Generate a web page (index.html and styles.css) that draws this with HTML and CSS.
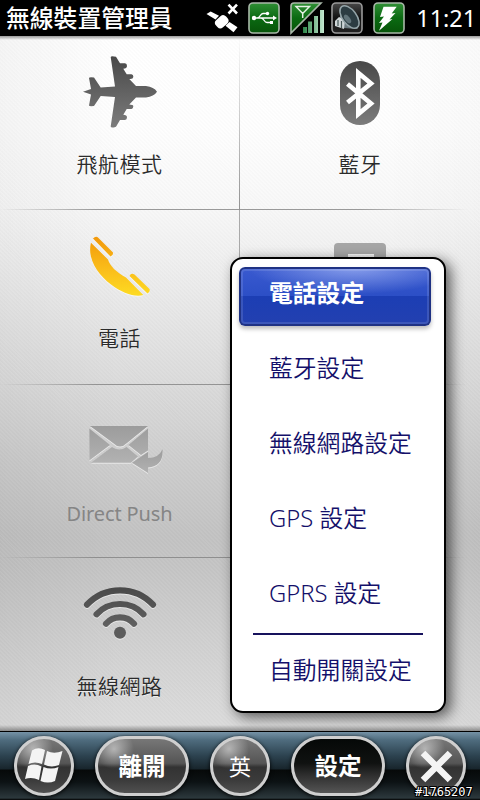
FILE: index.html
```html
<!DOCTYPE html>
<html lang="zh-Hant">
<head>
    <meta charset="utf-8">
    <title>無線裝置管理員</title>
    <link rel="stylesheet" href="styles.css">
</head>
<body>
    <div class="status-bar">
        <h1>無線裝置管理員</h1>
        <div class="status-icons">
            <svg width="32" height="36" viewBox="0 0 32 36" fill="#fff">
                <path d="M.5 14 4.7 11.5 13 15.7 9.5 19.5zM19.5 25.7 23.5 22 31.5 27.3 27.5 32.3z"/>
                <rect x="9" y="16.8" width="13.5" height="10" rx="4" transform="rotate(-42 15.7 21.8)"/>
                <path d="M22.5 4.7 31 13.5M31 4.7 22.5 13.5" stroke="#fff" stroke-width="2.6"/>
            </svg>
            <svg width="32" height="32" viewBox="0 0 32 32">
                <rect x="1" y="1" width="30" height="30" rx="4" fill="url(#green)" stroke="#a9b8a9" stroke-width="1.6"/>
                <path d="M5 16H27M9 16C12 16 12 12 15 11.5H19M13 16C16 16 16 20.500 19 20.500H23" fill="none" stroke="#fff" stroke-width="1.3"/>
                <circle cx="6" cy="16" r="2.200" fill="#fff"/>
                <circle cx="19.500" cy="11.500" r="1.700" fill="#fff"/>
                <rect x="22" y="19" width="3" height="3" fill="#fff"/>
                <path d="M25 13.500 29 16 25 18.500z" fill="#fff"/>
            </svg>
            <svg width="32" height="32" viewBox="0 0 32 32">
                <path d="M4 1H31L1 31V4Q1 1 4 1z" fill="url(#green)" stroke="#a9b8a9" stroke-width="1.6"/>
                <path d="M6 4.500H19.500L12.700 11.500zM12.700 10V16" fill="none" stroke="#e4f2e4" stroke-width="1.500"/>
                <path d="M13 25h4v6h-4zM18 19.500h4V31h-4zM24 14h4v17h-4zM30 8h4v23h-4z" fill="url(#bars)"/>
            </svg>
            <svg width="32" height="32" viewBox="0 0 32 32">
                <rect x="1" y="1" width="30" height="30" rx="4" fill="url(#dark)" stroke="#999" stroke-width="1.6"/>
                <path d="M9 17 9 7 27 27 12 26z" fill="#6b797f"/>
                <path d="M4 19 8 15 14 18 13 27 4 24z" fill="#cfd6d8"/>
                <path d="M7 18v6M10.500 19v7" stroke="#455" stroke-width="1.2"/>
                <ellipse cx="18.500" cy="15" rx="7" ry="13" transform="rotate(-37 18.500 15)" fill="#2c3c42" stroke="#94a4a8" stroke-width="1.500"/>
                <ellipse cx="16.500" cy="17" rx="2.500" ry="5" transform="rotate(-37 16.500 17)" fill="#62747a"/>
            </svg>
            <svg width="32" height="32" viewBox="0 0 32 32">
                <rect x="1" y="1" width="30" height="30" rx="4" fill="url(#green)" stroke="#a9b8a9" stroke-width="1.6"/>
                <path d="M10.500 4.700H23.700L18.700 11.500 22.500 11 16.500 17.500 19.500 17 6 28.700 9.500 20.500 6 21 11 14.500 7 15z" fill="#fff"/>
            </svg>
        </div>
        <span class="clock">11:21</span>
    </div>

    <div class="grid">
        <div class="tile">
            <svg class="icon" viewBox="0 0 80 80" fill="url(#metal)">
                <path d="M3 39.700 11 37 9 26Q9 25 14 25.500L20.700 35.500 35 34.500 30.700 5Q31 3.500 36 4.700L40 11.300H45Q47 11.500 47 14T43.300 16.700L46.700 22.300H51.500Q53.500 22.500 53.300 25T49.300 27L56 34H66Q74 35 77 39.700 74 44.500 66 45.500H56L49.300 52.500Q53.500 52.500 53.300 54.500T51.500 57H46.700L43.300 62.700Q47 62.700 47 65.300T45 68H40L36 74.700Q31 76.500 30.700 74.500L35 45 20.700 44 14 54Q9 54.500 9 53.500L11 42.500z"/>
            </svg>
            <span>飛航模式</span>
        </div>
        <div class="tile">
            <svg class="icon" viewBox="0 0 80 80">
                <rect x="20" y="9" width="40" height="64" rx="20" fill="url(#metal)"/>
                <path d="M27.500 32 51 51.500 38.300 62V21L51 31.500 27.500 50.500" fill="none" stroke="#fff" stroke-width="4.600"/>
            </svg>
            <span>藍牙</span>
        </div>
        <div class="tile">
            <svg class="icon" viewBox="0 0 80 80" fill="url(#gold)">
                <path d="M11 16.700 28 33.500C30 40 36 46 46 51.500L63.300 69C55 71.500 42 67 31 58.500 17 48 7 32 11 16.700z"/>
                <path d="M13 12.500Q16 9.500 18.500 12L33 26.500Q33.500 29 30.500 30.500zM49.500 50Q51 46.500 54.500 48.500L69.500 63Q70.500 65.500 67.500 67.500z"/>
            </svg>
            <span>電話</span>
        </div>
        <div class="tile">
            <svg class="icon" viewBox="0 0 80 80">
                <path d="M14 60V21Q14 17 18 17H62Q66 17 66 21V60H54V28H28V60z" fill="#a6a6a6"/>
            </svg>
        </div>
        <div class="tile off">
            <svg class="icon" viewBox="0 0 80 80" fill="url(#pale)">
                <path d="M10 25H68L47 42Q40 49 33 42zM9.300 27.500 30 44 9.300 59.500zM68 27.500V49.500L61 54 48.500 44zM11 61.700 32 46Q39.500 51 46.500 46L58 55.500 51 61.700z"/>
                <path d="M52 61.700 68 51V57Q79 57 82.500 48.300 84 65 68 66.500V72z"/>
            </svg>
            <span class="latin">Direct Push</span>
        </div>
        <div class="tile"></div>
        <div class="tile">
            <svg class="icon" viewBox="0 0 80 80" fill="none" stroke="url(#wave)" stroke-width="6.200" stroke-linecap="round">
                <path d="M7 30.700A45 45 0 0 1 73 30.700M16.500 40.300A32 32 0 0 1 63.500 40.300M26 49.700A18.500 18.500 0 0 1 54 49.700"/>
                <circle cx="40" cy="58.700" r="6" fill="#5c5c5c" stroke="none"/>
            </svg>
            <span>無線網路</span>
        </div>
        <div class="tile"></div>

        <div class="menu">
            <div class="item selected">電話設定</div>
            <div class="item">藍牙設定</div>
            <div class="item">無線網路設定</div>
            <div class="item">GPS 設定</div>
            <div class="item">GPRS 設定</div>
            <div class="line"></div>
            <div class="item last">自動開關設定</div>
        </div>
    </div>

    <div class="toolbar">
        <div class="button round">
            <svg width="60" height="60" viewBox="0 0 60 60" fill="#f4f4f4">
                <path d="M18 14.500Q24 10.500 31 14L28 28Q21 25 14.500 28zM33 15Q40 18.500 48.500 15L45 29Q37 32 30 28.500zM14 30Q21 27 27.500 30.500L25 44Q18 40.500 11 43zM29.500 31Q37 34 44.500 31L41 45Q34 48 26.500 45z"/>
            </svg>
        </div>
        <div class="button">離開</div>
        <div class="button round lang">英</div>
        <div class="button pressed">設定</div>
        <div class="button round">
            <svg width="60" height="60" viewBox="0 0 60 60">
                <path d="M17 17 44 44M44 17 17 44" stroke="#f4f4f4" stroke-width="6.500"/>
            </svg>
        </div>
        <span class="stamp">#1765207</span>
    </div>

    <!-- shared gradients -->
    <svg class="defs" width="0" height="0">
        <defs>
            <linearGradient id="green" x1="0" y1="0" x2="0" y2="1">
                <stop offset="0" stop-color="#2f8f35"/>
                <stop offset=".5" stop-color="#0b6a12"/>
                <stop offset="1" stop-color="#075409"/>
            </linearGradient>
            <linearGradient id="bars" x1="0" y1="0" x2="1" y2="0">
                <stop offset="0" stop-color="#2c8548"/>
                <stop offset="1" stop-color="#c4e8d0"/>
            </linearGradient>
            <linearGradient id="dark" x1="0" y1="0" x2="0" y2="1">
                <stop offset="0" stop-color="#484848"/>
                <stop offset=".5" stop-color="#111"/>
                <stop offset="1" stop-color="#222"/>
            </linearGradient>
            <linearGradient id="metal" x1="0" y1="0" x2="0" y2="1">
                <stop offset="0" stop-color="#484848"/>
                <stop offset="1" stop-color="#7c7c7c"/>
            </linearGradient>
            <linearGradient id="wave" gradientUnits="userSpaceOnUse" x1="0" y1="12" x2="0" y2="60">
                <stop offset="0" stop-color="#484848"/>
                <stop offset="1" stop-color="#666"/>
            </linearGradient>
            <linearGradient id="gold" gradientUnits="userSpaceOnUse" x1="0" y1="12" x2="0" y2="70">
                <stop offset="0" stop-color="#f29a0c"/>
                <stop offset=".6" stop-color="#fbc11b"/>
                <stop offset="1" stop-color="#fddb22"/>
            </linearGradient>
            <linearGradient id="pale" x1="0" y1="0" x2="0" y2="1">
                <stop offset="0" stop-color="#9c9c9c"/>
                <stop offset="1" stop-color="#b2b2b2"/>
            </linearGradient>
        </defs>
    </svg>
</body>
</html>
```
FILE: styles.css
```css
body {
    margin: 0;
    width: 480px;
    height: 800px;
    display: flex;
    flex-direction: column;
    position: relative;
    overflow: hidden;
    background: #000;
    font-family: "Noto Sans", "Noto Sans CJK TC", sans-serif;
}

.status-bar {
    height: 36px;
    display: flex;
    align-items: center;
    color: #fff;
    background: #000;
}

.status-bar h1 {
    width: 200px;
    margin: 0 0 0 6px;
    font-size: 23.8px;
    font-weight: 500;
    line-height: 36px;
    white-space: nowrap;
}

.status-icons {
    display: flex;
    align-items: center;
    gap: 9.8px;
}

.status-icons svg {
    overflow: visible;
}

.clock {
    margin-left: 11px;
    font-size: 23.5px;
    line-height: 35px;
}

.grid {
    height: 695px;
    display: grid;
    grid-template-columns: 240px 240px;
    grid-template-rows: 174px 175px 173px 173px;
    position: relative;
    background:
        linear-gradient(#999 0, rgba(255,255,255,0) 4px),
        linear-gradient(rgba(0,0,0,0) 689px, rgba(0,0,0,0.35) 695px),
        repeating-linear-gradient(45deg, rgba(255,255,255,0.04) 0, rgba(255,255,255,0.04) 1.4px, rgba(0,0,0,0.01) 1.4px, rgba(0,0,0,0.01) 2.8px),
        linear-gradient(90deg, rgba(0,0,0,0.04), rgba(0,0,0,0) 25%, rgba(0,0,0,0) 80%, rgba(0,0,0,0.02)),
        linear-gradient(#fff 0, #fefefe 90px, #f8f8f8 170px, #e9e9e9 260px, #dcdcdc 340px, #cdcdcd 420px, #c2c2c2 500px, #c4c4c4 530px, #d0d0d0 610px, #dadada 680px, #dadada 100%);
}

.tile {
    display: flex;
    flex-direction: column;
    align-items: center;
    box-sizing: border-box;
    padding-top: 16px;
    color: #2b2b2b;
    font-size: 21px;
    font-weight: 350;
    line-height: 30px;
    letter-spacing: 0.5px;
    text-shadow: 0 1px 0 rgba(255,255,255,0.6);
}

.tile:nth-child(odd) {
    border-right: 1px solid rgba(120,120,120,0.6);
    background: linear-gradient(90deg, rgba(130,130,130,0), rgba(130,130,130,0.8) 40%) bottom / 100% 1px no-repeat;
}

.tile:nth-child(even) {
    background: linear-gradient(270deg, rgba(130,130,130,0) 5%, rgba(130,130,130,0.8) 50%) bottom / 100% 1px no-repeat;
}

.tile:first-child {
    border-image: linear-gradient(rgba(120,120,120,0), rgba(120,120,120,0.8)) 1;
}

/* the bottom row has no rules of its own */
.tile:nth-child(7),
.tile:nth-child(8) {
    border: 0;
    padding-right: 1px;
    background: none;
}

.icon {
    width: 80px;
    height: 80px;
    flex: none;
    overflow: visible;
    margin-bottom: 17px;
    filter: drop-shadow(0 1px 0 rgba(255,255,255,0.55));
}

.off {
    color: #858585;
    text-shadow: none;
}

.latin {
    font-size: 20px;
    font-weight: 400;
    line-height: 32px;
    letter-spacing: -0.1px;
}

.menu {
    position: absolute;
    left: 230px;
    top: 221px;
    box-sizing: border-box;
    width: 216px;
    height: 456px;
    padding: 8px 13px 0 7px;
    border: 2px solid #000;
    border-radius: 13px;
    background: #fff;
    box-shadow: 5px 4px 14px rgba(0,0,0,0.6);
}

.item {
    height: 59px;
    margin-bottom: 16px;
    padding-left: 30px;
    color: #14106a;
    font-size: 23.8px;
    font-weight: 350;
    line-height: 53px;
    white-space: nowrap;
}

.selected {
    color: #fff;
    font-weight: 700;
    border-radius: 6px;
    background:
        radial-gradient(ellipse at 60% 0, rgba(190,205,255,0.6), rgba(190,205,255,0) 65%) top / 100% 50% no-repeat,
        linear-gradient(#3a5ad0 0, #2c4fc6 49%, #1c3eb4 50%, #2340b0 100%);
    box-shadow: inset 0 0 0 2px #1f3284, inset 0 0 0 4px rgba(255,255,255,0.12), 0 3px 4px rgba(0,0,0,0.25);
}

.line {
    width: 170px;
    height: 2px;
    margin: -9px 0 9px 14px;
    background: #17125c;
}

.last {
    margin: 0;
}

.toolbar {
    height: 69px;
    display: flex;
    gap: 21px;
    align-items: center;
    box-sizing: border-box;
    padding: 0 14px;
    position: relative;
    border-top: 1px solid #000;
    background: linear-gradient(#7592a6 0, #4f6c7e 8px, #2c424f 24px, #18252c 37px, #060909 38px, #0c1214 50px, #2c383c 66px, #000 68px);
}

.button {
    width: 94px;
    height: 60px;
    flex: none;
    display: flex;
    align-items: center;
    justify-content: center;
    box-sizing: border-box;
    border: 3px solid #cfcfcf;
    border-radius: 30px;
    color: #fff;
    font-size: 23.5px;
    font-weight: 700;
    line-height: 50px;
    background:
        radial-gradient(circle at 16px 10px, rgba(255,255,255,0.5), rgba(255,255,255,0) 20px),
        linear-gradient(#777 0, #555 45%, #333 52%, #3a3a3a 75%, #505050 100%);
    box-shadow: 0 1px 4px #000;
}

.round {
    width: 60px;
}

.lang {
    font-size: 22px;
    font-weight: 400;
}

.button svg {
    flex: none;
}

.pressed {
    background: linear-gradient(#050807 0, #101211 45%, #2c2c2c 65%, #555 100%);
}

.stamp {
    position: absolute;
    left: 415px;
    bottom: 1px;
    color: #fff;
    font: 12px/14px "DejaVu Sans Mono", monospace;
    text-shadow: -1px -1px #000, 1px -1px #000, -1px 1px #000, 1px 1px #000, 0 1px #000, 0 -1px #000, 1px 0 #000, -1px 0 #000;
}

.defs {
    position: absolute;
}
```
